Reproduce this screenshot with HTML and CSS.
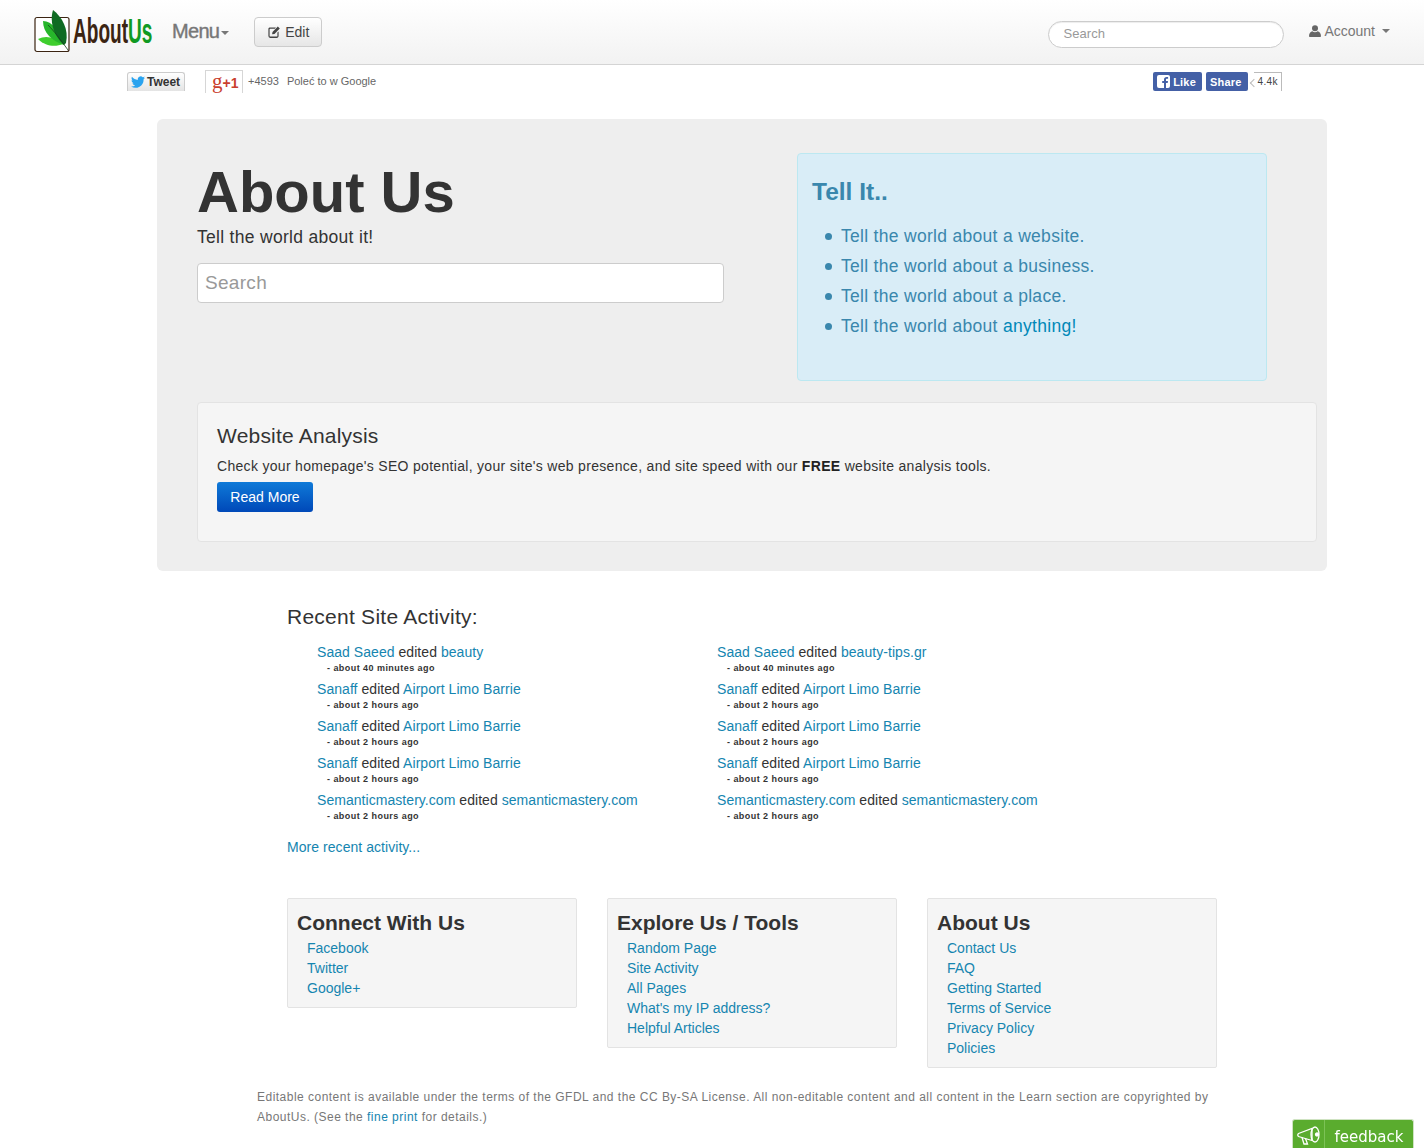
FILE: index.html

```html
<!DOCTYPE html>
<html lang="en">
<head>
  <meta charset="UTF-8">
  <title>About Us</title>
  <link rel="stylesheet" href="styles.css">
</head>
<body>
<div class="navbar">
  <a class="brand" href="#">
    <svg class="brand-leaf" width="38" height="44" viewBox="0 0 38 44">
      <rect x="1" y="8.500" width="34" height="34" rx="2" fill="#fff" stroke="#3b2412" stroke-width="1.200"/>
      <path d="M4 30 C12 26 20 28 29 35 C22 38 12 38 4 30Z" fill="#3fce2e"/>
      <path d="M9 12 C18 12 26 22 30 36 C18 32 9 24 9 12Z" fill="#27b52b"/>
      <path d="M19 1 C28 8 35 20 32 34 L30 36 C21 28 15 14 19 1Z" fill="#0f6b23"/>
      <path d="M14 16 C20 22 26 30 34 41" fill="none" stroke="#16401a" stroke-width="0.800"/>
    </svg>
    <span class="brand-text"><span class="brand-about">About</span><span class="brand-us">Us</span></span>
  </a>
  <a class="nav-menu" href="#">Menu<i class="caret"></i></a>
  <a class="btn-edit" href="#">
    <svg width="14" height="14" viewBox="0 0 14 14"><path d="M2.500 2.500H9L7.800 3.700H3.200a.6.6 0 0 0-.6.6v6.600c0 .3.3.6.6.6h6.600c.3 0 .6-.3.6-.6V7.600l1.200-1.200v4.700c0 1-.8 1.800-1.800 1.800H3.200a1.800 1.800 0 0 1-1.800-1.800V4.300c0-1 .5-1.800 1.100-1.800Z" fill="#444"/><path d="M5.500 6.900 10.800 1.600l2 2-5.300 5.300-2.400.4Z" fill="#444"/></svg>
    Edit
  </a>
  <input class="nav-search" type="text" placeholder="Search">
  <a class="nav-account" href="#">
    <svg width="12" height="12" viewBox="0 0 12 12"><circle cx="6" cy="3.200" r="3" fill="#666"/><path d="M0 11.200C0 8 1.600 6.400 3.400 6.200 4.200 6.900 5 7.200 6 7.200s1.800-.3 2.600-1c1.800.2 3.400 1.800 3.400 5 0 .5-.4.8-.9.8H.9c-.5 0-.9-.3-.9-.8Z" fill="#666"/></svg>
    Account <i class="caret caret-account"></i>
  </a>
</div>

<div class="social">
  <a class="tweet" href="#">
    <svg width="14" height="12" viewBox="0 0 16 13"><path d="M16 1.600c-.6.300-1.200.400-1.900.500.700-.400 1.200-1 1.400-1.800-.6.400-1.300.600-2.100.800A3.300 3.300 0 0 0 7.800 4.100C5.100 4 2.700 2.700 1.100.6c-.9 1.500-.4 3.400 1 4.400-.5 0-1-.2-1.500-.4 0 1.600 1.100 3 2.600 3.300-.5.100-1 .1-1.500 0 .4 1.300 1.600 2.200 3.100 2.300A6.600 6.600 0 0 1 0 11.500 9.300 9.300 0 0 0 14.400 3.300c.6-.4 1.200-1 1.600-1.700Z" fill="#2aa3ef"/></svg>
    Tweet
  </a>
  <a class="gplus" href="#"><span class="gplus-g">g</span>+1</a>
  <span class="gplus-count">+4593</span>
  <span class="gplus-label">Poleć to w Google</span>
  <div class="fb">
    <a class="fb-btn" href="#">
      <svg class="fb-mark" width="13" height="13" viewBox="0 0 13 13"><rect width="13" height="13" rx="2" fill="#fff"/><path d="M9 13V8h1.700l.3-2H9V4.800c0-.6.200-1 1-1h1.100V2c-.3 0-.9-.1-1.500-.1C8 1.900 7 2.900 7 4.500V6H5.200v2H7v5Z" fill="#4460a6"/></svg>Like
    </a>
    <a class="fb-btn" href="#">Share</a>
    <span class="fb-count">4.4k</span>
  </div>
</div>

<div class="hero">
  <div class="hero-top">
    <div class="hero-left">
      <h1>About Us</h1>
      <p class="tagline">Tell the world about it!</p>
      <input class="hero-search" type="text" placeholder="Search">
    </div>
    <div class="tell">
      <h2>Tell It..</h2>
      <ul>
        <li>Tell the world about a website.</li>
        <li>Tell the world about a business.</li>
        <li>Tell the world about a place.</li>
        <li>Tell the world about <a href="#">anything!</a></li>
      </ul>
    </div>
  </div>
  <div class="analysis">
    <h3>Website Analysis</h3>
    <p>Check your homepage's SEO potential, your site's web presence, and site speed with our <b>FREE</b> website analysis tools.</p>
    <a class="btn-primary" href="#">Read More</a>
  </div>
</div>

<div class="activity">
  <h3>Recent Site Activity:</h3>
  <div class="activity-grid">
    <div class="entry"><a href="#">Saad Saeed</a> edited <a href="#">beauty</a><small>- about 40 minutes ago</small></div>
    <div class="entry"><a href="#">Saad Saeed</a> edited <a href="#">beauty-tips.gr</a><small>- about 40 minutes ago</small></div>
    <div class="entry"><a href="#">Sanaff</a> edited <a href="#">Airport Limo Barrie</a><small>- about 2 hours ago</small></div>
    <div class="entry"><a href="#">Sanaff</a> edited <a href="#">Airport Limo Barrie</a><small>- about 2 hours ago</small></div>
    <div class="entry"><a href="#">Sanaff</a> edited <a href="#">Airport Limo Barrie</a><small>- about 2 hours ago</small></div>
    <div class="entry"><a href="#">Sanaff</a> edited <a href="#">Airport Limo Barrie</a><small>- about 2 hours ago</small></div>
    <div class="entry"><a href="#">Sanaff</a> edited <a href="#">Airport Limo Barrie</a><small>- about 2 hours ago</small></div>
    <div class="entry"><a href="#">Sanaff</a> edited <a href="#">Airport Limo Barrie</a><small>- about 2 hours ago</small></div>
    <div class="entry"><a href="#">Semanticmastery.com</a> edited <a href="#">semanticmastery.com</a><small>- about 2 hours ago</small></div>
    <div class="entry"><a href="#">Semanticmastery.com</a> edited <a href="#">semanticmastery.com</a><small>- about 2 hours ago</small></div>
  </div>
  <a class="more" href="#">More recent activity...</a>
</div>

<div class="columns">
  <div class="well">
    <h4>Connect With Us</h4>
    <ul>
      <li><a href="#">Facebook</a></li>
      <li><a href="#">Twitter</a></li>
      <li><a href="#">Google+</a></li>
    </ul>
  </div>
  <div class="well">
    <h4>Explore Us / Tools</h4>
    <ul>
      <li><a href="#">Random Page</a></li>
      <li><a href="#">Site Activity</a></li>
      <li><a href="#">All Pages</a></li>
      <li><a href="#">What's my IP address?</a></li>
      <li><a href="#">Helpful Articles</a></li>
    </ul>
  </div>
  <div class="well">
    <h4>About Us</h4>
    <ul>
      <li><a href="#">Contact Us</a></li>
      <li><a href="#">FAQ</a></li>
      <li><a href="#">Getting Started</a></li>
      <li><a href="#">Terms of Service</a></li>
      <li><a href="#">Privacy Policy</a></li>
      <li><a href="#">Policies</a></li>
    </ul>
  </div>
</div>

<p class="legal">Editable content is available under the terms of the GFDL and the CC By-SA License. All non-editable content and all content in the Learn section are copyrighted by AboutUs. (See the <a href="#">fine print</a> for details.)</p>

<a class="feedback" href="#">
  <span class="feedback-icon">
    <svg width="26" height="22" viewBox="0 0 26 22" fill="none" stroke="#fff" stroke-width="1.300"><path d="M1.500 8.500 15 3.500v12L1.500 11.500c-1-.8-1-2.200 0-3Z"/><ellipse cx="18" cy="9.500" rx="4" ry="7.500"/><path d="M5 12.500 7 19h3.500l-2-5.500"/><circle cx="20" cy="9.500" r="1.500" fill="#fff"/></svg>
  </span>
  <span class="feedback-text">feedback</span>
</a>
</body>
</html>
```

FILE: styles.css

```css
* {
  box-sizing: border-box;
}

body {
  margin: 0;
  height: 1148px;
  overflow: hidden;
  font-family: "Liberation Sans", Arial, sans-serif;
  font-size: 14px;
  line-height: 20px;
  color: #333;
  background-color: #fff;
}

a {
  color: #1585b0;
  text-decoration: none;
}

ul {
  list-style: none;
  margin: 0;
  padding: 0;
}

.caret {
  display: inline-block;
  width: 0;
  height: 0;
  margin-left: 2px;
  vertical-align: middle;
  border-top: 4px solid #777;
  border-left: 4px solid transparent;
  border-right: 4px solid transparent;
}

.caret-account {
  margin-left: 4px;
}

/* navbar */
.navbar {
  display: flex;
  align-items: flex-start;
  height: 65px;
  padding: 0 34px;
  background: linear-gradient(to bottom, #fff, #f2f2f2);
  border-bottom: 1px solid #d4d4d4;
}

.brand {
  display: flex;
  align-items: flex-start;
  width: 138px;
  margin-top: 9px;
}

.brand-leaf {
  flex: none;
}

.brand-text {
  display: block;
  margin: 3px 0 0 1px;
  font-size: 35px;
  line-height: 38px;
  font-weight: bold;
  white-space: nowrap;
  transform: scaleX(0.545);
  transform-origin: left top;
}

.brand-about {
  color: #3b2412;
}

.brand-us {
  color: #109a22;
}

.nav-menu {
  margin-top: 19px;
  font-size: 20px;
  line-height: 24px;
  color: #777;
  letter-spacing: -0.7px;
  -webkit-text-stroke: 0.4px #777;
}

.btn-edit {
  display: flex;
  align-items: center;
  gap: 4px;
  height: 30px;
  margin: 17px 0 0 25px;
  padding: 0 12px;
  color: #444;
  background: linear-gradient(to bottom, #fff, #e6e6e6);
  border: 1px solid #ccc;
  border-radius: 4px;
}

.nav-search {
  width: 236px;
  height: 27px;
  margin: 21px 25px 0 auto;
  padding: 0 14px 2px;
  font-family: inherit;
  font-size: 13px;
  letter-spacing: 0.1px;
  background: #fff;
  border: 1px solid #ccc;
  border-radius: 14px;
  box-shadow: inset 0 1px 1px rgba(0, 0, 0, 0.075);
}

.nav-search::placeholder,
.hero-search::placeholder {
  color: #999;
  opacity: 1;
}

.nav-account {
  display: flex;
  align-items: center;
  gap: 3px;
  height: 20px;
  margin-top: 21px;
  color: #777;
}

/* social buttons */
.social {
  display: flex;
  align-items: flex-start;
  height: 54px;
  padding: 5px 0 0 127px;
  font-size: 11px;
  color: #666;
}

.tweet {
  display: flex;
  align-items: center;
  gap: 2px;
  width: 58px;
  height: 19px;
  margin-top: 2px;
  padding-left: 3px;
  font-size: 12px;
  font-weight: bold;
  color: #333;
  background: linear-gradient(to bottom, #fff, #e4e4e4);
  border: 1px solid #ccc;
  border-bottom: 0;
  border-radius: 3px 3px 0 0;
}

.gplus {
  width: 38px;
  height: 23px;
  margin-left: 20px;
  padding-left: 6px;
  font-size: 14px;
  line-height: 21px;
  font-weight: bold;
  color: #c9402e;
  background: #fff;
  border: 1px solid #d6d6d6;
  border-bottom: 0;
}

.gplus-g {
  font-family: "Liberation Serif", serif;
  font-size: 21px;
  font-weight: normal;
}

.gplus-count {
  margin: 1px 0 0 5px;
}

.gplus-label {
  margin: 1px 0 0 8px;
}

.fb {
  display: flex;
  align-items: flex-start;
  gap: 4px;
  margin: 2px 0 0 777px;
}

.fb-btn {
  display: flex;
  align-items: center;
  height: 19px;
  padding: 0 6px 0 4px;
  font-weight: bold;
  letter-spacing: 0.2px;
  color: #fff;
  background: #4460a6;
  border-radius: 2px;
}

.fb-mark {
  margin-right: 3px;
}

.fb-count {
  position: relative;
  height: 19px;
  margin-left: 2px;
  padding: 0 3px 0 4px;
  font-size: 10px;
  line-height: 18px;
  letter-spacing: 0.3px;
  color: #444;
  background: #fff;
  border: 1px solid #bbb;
  border-bottom: 0;
  border-left: 0;
}

.fb-count::before {
  content: "";
  position: absolute;
  left: -3px;
  top: 7px;
  width: 5px;
  height: 5px;
  border-left: 1px solid #bbb;
  border-bottom: 1px solid #bbb;
  transform: rotate(45deg);
}

/* hero */
.hero {
  width: 1170px;
  height: 452px;
  margin-left: 157px;
  padding: 34px 10px 0 40px;
  background: #eee;
  border-radius: 6px;
}

.hero-top {
  display: flex;
  height: 249px;
}

.hero-left {
  width: 600px;
}

h1 {
  margin: 0;
  padding-top: 9px;
  font-size: 58px;
  line-height: 60px;
  font-weight: bold;
  color: #333;
}

.tagline {
  margin: 3px 0 0;
  font-size: 17.500px;
  line-height: 24px;
  letter-spacing: 0.3px;
}

.hero-search {
  display: block;
  width: 527px;
  height: 40px;
  margin-top: 14px;
  padding: 0 7px;
  font-family: inherit;
  font-size: 19px;
  letter-spacing: 0.3px;
  background: #fff;
  border: 1px solid #ccc;
  border-radius: 4px;
}

.tell {
  width: 470px;
  height: 228px;
  padding: 23px 14px 0;
  font-size: 17.500px;
  color: #3a87ad;
  background: #d9edf7;
  border: 1px solid #bce8f1;
  border-radius: 4px;
}

.tell h2 {
  margin: 0 0 14px;
  font-size: 24.500px;
  line-height: 30px;
  font-weight: bold;
}

.tell ul {
  padding-left: 29px;
}

.tell li {
  line-height: 30px;
  letter-spacing: 0.3px;
}

.tell li::before {
  content: "";
  display: inline-block;
  width: 7px;
  height: 7px;
  margin: 0 9px 0 -16px;
  vertical-align: 2px;
  background: #3a87ad;
  border-radius: 50%;
}

.tell a {
  color: #0088b8;
}

.analysis {
  width: 1120px;
  height: 140px;
  padding: 19px 19px 0;
  background: #f5f5f5;
  border: 1px solid #e3e3e3;
  border-radius: 4px;
}

.analysis h3 {
  margin: 0 0 6px;
  font-size: 21px;
  line-height: 28px;
  font-weight: normal;
  letter-spacing: 0.2px;
}

.analysis p {
  margin: 0 0 6px;
  letter-spacing: 0.31px;
}

.analysis b {
  color: #222;
}

.btn-primary {
  display: block;
  width: 96px;
  height: 30px;
  line-height: 30px;
  text-align: center;
  color: #fff;
  background: linear-gradient(to bottom, #0f7ad8, #0048b8);
  border-radius: 3px;
}

/* recent activity */
.activity {
  margin: 32px 0 0 287px;
  letter-spacing: 0.05px;
}

.activity h3 {
  margin: 0 0 11px;
  font-size: 21px;
  line-height: 28px;
  font-weight: normal;
  letter-spacing: 0.25px;
}

.activity-grid {
  display: grid;
  grid-template-columns: 400px 400px;
  grid-auto-rows: 37px;
  padding-left: 30px;
}

.entry small {
  display: block;
  margin: 0 0 0 10px;
  font-size: 9px;
  line-height: 12px;
  font-weight: bold;
  letter-spacing: 0.45px;
}

.more {
  display: block;
  margin-top: 10px;
}

/* footer columns */
.columns {
  display: flex;
  align-items: flex-start;
  gap: 30px;
  margin: 41px 0 0 287px;
}

.well {
  width: 290px;
  padding: 9px;
  background: #f5f5f5;
  border: 1px solid #e3e3e3;
  border-radius: 2px;
}

.well h4 {
  margin: 0;
  font-size: 21px;
  line-height: 30px;
  font-weight: bold;
}

.well ul {
  padding-left: 10px;
}

.legal {
  width: 970px;
  margin: 19px 0 0 257px;
  font-size: 12px;
  color: #777;
  letter-spacing: 0.48px;
}

.feedback {
  position: fixed;
  left: 1292px;
  bottom: 0;
  display: flex;
  width: 122px;
  height: 29px;
  color: #fff;
  background: #5aac2e;
  border: 1px solid #cfe3c2;
  border-bottom: 0;
  border-radius: 3px 3px 0 0;
}

.feedback-icon {
  width: 32px;
  padding: 5px 0 0 4px;
  border-right: 1px solid #7cc256;
}

.feedback-text {
  flex: 1;
  padding-top: 7px;
  font-family: "DejaVu Sans", sans-serif;
  font-size: 15px;
  text-align: center;
}
```
